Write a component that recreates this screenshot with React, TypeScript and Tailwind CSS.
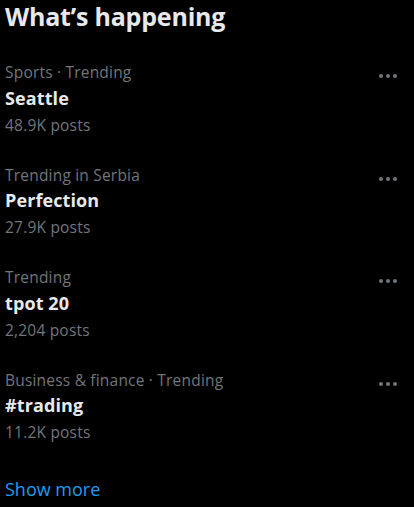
import { type ReactNode } from "react";

type Trend = {
  category: string;
  name: string;
  posts: string;
};

const trends: Trend[] = [
  { category: "Sports · Trending", name: "Seattle", posts: "48.9K posts" },
  { category: "Trending in Serbia", name: "Perfection", posts: "27.9K posts" },
  { category: "Trending", name: "tpot 20", posts: "2,204 posts" },
  {
    category: "Business & finance · Trending",
    name: "#trading",
    posts: "11.2K posts",
  },
];

function MoreIcon(): ReactNode {
  return (
    <svg width="24" height="24" viewBox="0 0 24 24" className="shrink-0 self-start mt-[2px]">
      <circle cx="5" cy="12" r="2" fill="#71767b" />
      <circle cx="12" cy="12" r="2" fill="#71767b" />
      <circle cx="19" cy="12" r="2" fill="#71767b" />
    </svg>
  );
}

function TrendItem({ trend }: { trend: Trend }): ReactNode {
  return (
    <div className="flex justify-between pl-[5px] pr-[14px] py-[15px]">
      <div className="flex flex-col">
        <span className="text-[15.5px] leading-[20px] tracking-[0.2px] text-[#71767b]">
          {trend.category}
        </span>
        <span className="mt-[3.5px] text-[18px] leading-[25px] tracking-[0.1px] font-bold text-[#e7e9ea]">
          {trend.name}
        </span>
        <span className="mt-[4px] text-[15.5px] leading-[20px] tracking-[0.2px] text-[#71767b]">
          {trend.posts}
        </span>
      </div>
      <MoreIcon />
    </div>
  );
}

export default function App(): ReactNode {
  return (
    <div
      className="w-[414px] h-[507px] bg-black overflow-hidden"
      style={{ fontFamily: "'Open Sans', 'Noto Sans', sans-serif" }}
    >
      <h2 className="pl-[5px] pb-[14px] text-[25px] leading-[33px] tracking-[-0.2px] font-bold text-[#e7e9ea]">
        What’s happening
      </h2>
      {trends.map((t) => (
        <TrendItem key={t.name} trend={t} />
      ))}
      <div className="pl-[5px] pt-[21px]">
        <a href="#" className="text-[18px] leading-[20px] text-[#1d9bf0]">
          Show more
        </a>
      </div>
    </div>
  );
}
